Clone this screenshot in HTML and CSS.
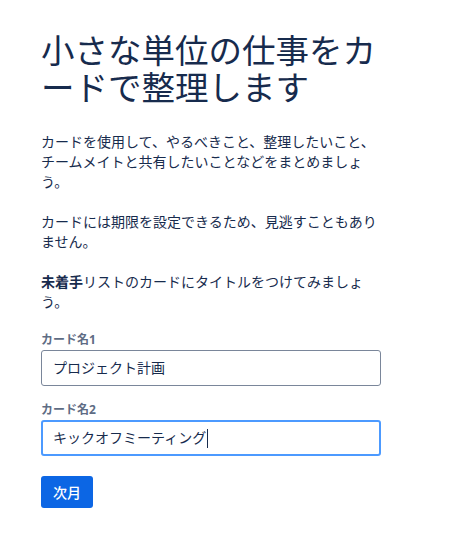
FILE: index.html
```html
<!DOCTYPE html>
<html lang="ja">
<head>
<meta charset="utf-8">
<title>カード</title>
<link rel="stylesheet" href="styles.css">
</head>
<body>
<main class="page">
  <h1 class="title">小さな単位の仕事をカードで整理します</h1>
  <p class="text">カードを使用して、やるべきこと、整理したいこと、チームメイトと共有したいことなどをまとめましょう。</p>
  <p class="text">カードには期限を設定できるため、見逃すこともありません。</p>
  <p class="text"><strong>未着手</strong>リストのカードにタイトルをつけてみましょう。</p>
  <div class="field">
    <div class="label">カード名1</div>
    <div class="input">プロジェクト計画</div>
  </div>
  <div class="field">
    <div class="label">カード名2</div>
    <div class="input focused">キックオフミーティング<span class="caret"></span></div>
  </div>
  <button class="button" type="button">次月</button>
</main>
</body>
</html>
```
FILE: styles.css
```css
html, body {
  margin: 0;
  padding: 0;
  background: #ffffff;
}
body {
  font-family: "Noto Sans", "Noto Sans CJK JP", sans-serif;
  color: #172b4d;
}
.page {
  width: 340px;
  margin-left: 41px;
  padding-top: 32px;
}
.title {
  font-size: 33.5px;
  line-height: 37px;
  font-weight: 400;
  margin: 0 0 26px 0;
  color: #172b4d;
}
.text {
  font-size: 14px;
  line-height: 20px;
  margin: 0 0 20px 0;
}
.text strong {
  font-weight: 700;
}
.field {
  display: flex;
  flex-direction: column;
  margin-bottom: 16px;
}
.label {
  font-size: 12px;
  line-height: 16px;
  font-weight: 700;
  color: #5e6c84;
  margin-bottom: 2px;
}
.input {
  box-sizing: border-box;
  height: 36px;
  border: 1px solid #7a869a;
  border-radius: 3px;
  padding: 0 11px;
  font-size: 14px;
  line-height: 20px;
  display: flex;
  align-items: center;
  color: #172b4d;
}
.input.focused {
  border: 2px solid #4c9aff;
  padding: 0 10px;
}
.caret {
  display: inline-block;
  width: 1px;
  height: 19px;
  background: #172b4d;
  margin-left: 1px;
}
.button {
  margin-top: 4px;
  height: 32px;
  padding: 0 12px;
  border: none;
  border-radius: 3px;
  background: #0c66e4;
  color: #ffffff;
  font-family: "Noto Sans", "Noto Sans CJK JP", sans-serif;
  font-size: 14px;
  font-weight: 500;
  cursor: pointer;
}
```
